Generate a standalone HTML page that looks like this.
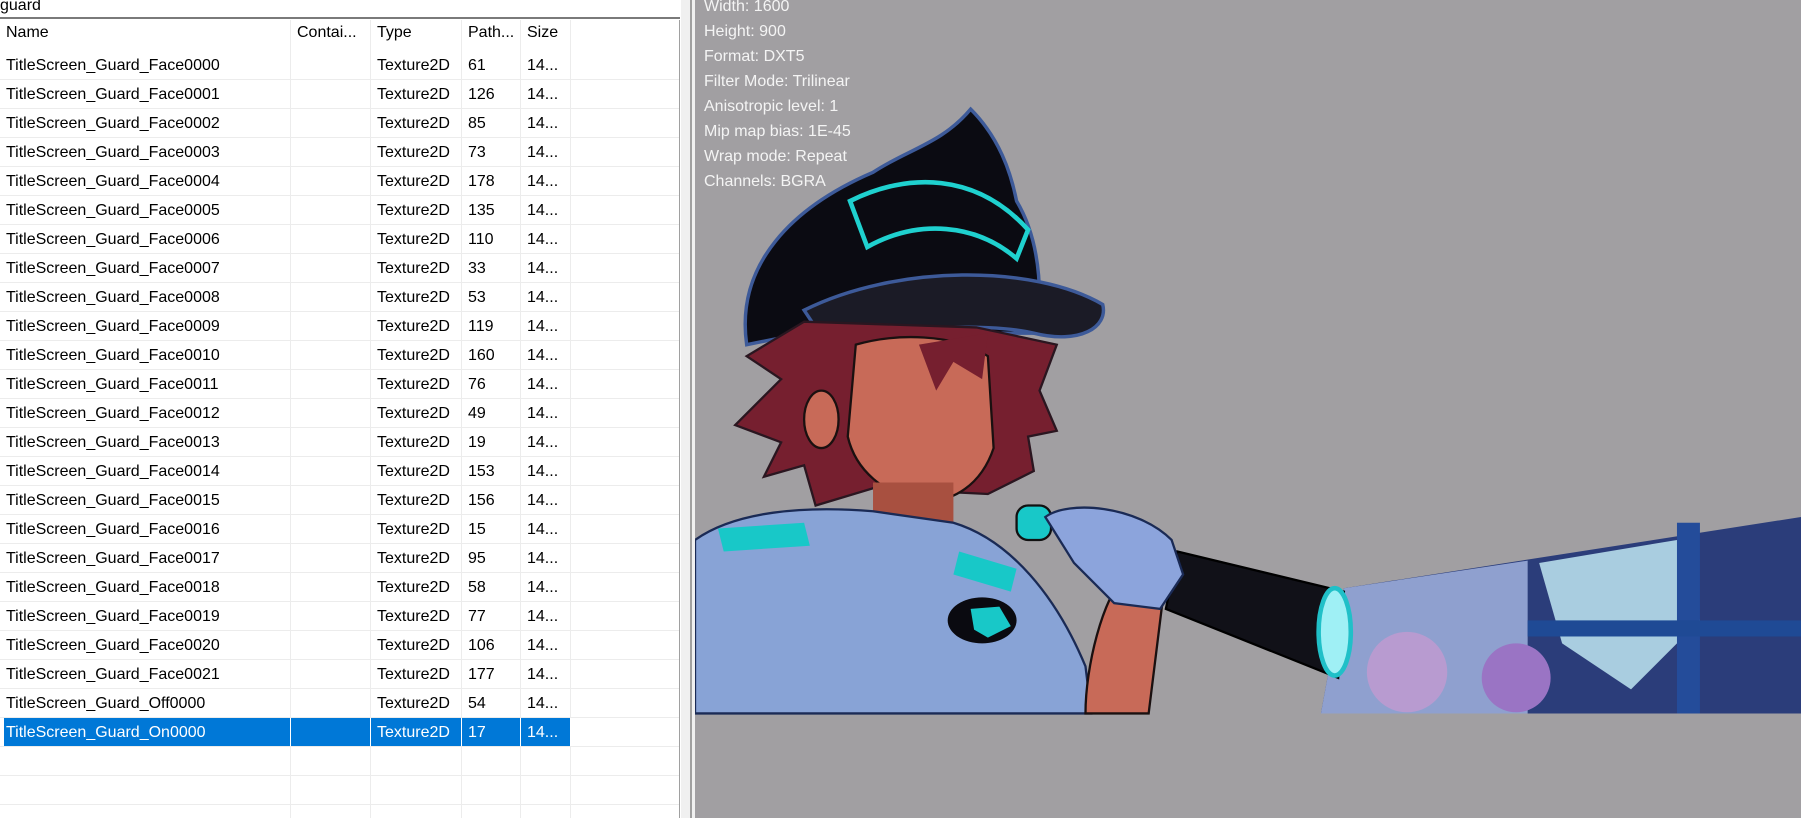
<!DOCTYPE html>
<html><head><meta charset="utf-8"><style>
body{margin:0;width:1801px;height:818px;overflow:hidden;background:#fff;font-family:"Segoe UI","Liberation Sans",sans-serif;position:relative}
#search{position:absolute;left:0;top:0;width:680px;height:17px;border-bottom:2px solid #7a7a7a;font-size:16px;line-height:12px;color:#000;overflow:hidden}
#tbl{position:absolute;left:0;top:20px;width:679px;height:798px;border-right:1px solid #a0a0a0;overflow:hidden}
.row{position:absolute;left:0;height:29px;width:679px;font-size:16px;line-height:29px;color:#000;border-bottom:1px solid #ececec;box-sizing:border-box}
.hdr{border-bottom:none}
.row span{position:absolute;top:0;height:28px;border-right:1px solid #ececec;padding-left:6px;box-sizing:border-box;white-space:nowrap;overflow:hidden}
.c1{left:0;width:291px}.c2{left:291px;width:80px}.c3{left:371px;width:91px}.c4{left:462px;width:59px}.c5{left:521px;width:50px}
.hdr span{height:31px;line-height:26px}
.sel span{background:#0078d7;color:#fff;border-right:1px solid #fff}
.sel .c1{left:4px;width:287px;padding-left:2px}
#split{position:absolute;left:681px;top:0;width:14px;height:818px;background:#f0f0f0}
#split i{position:absolute;left:9px;top:0;width:2px;height:818px;background:#a0a0a0}
#right{position:absolute;left:695px;top:0;width:1106px;height:818px;background:#a19fa2}
#info{position:absolute;left:704px;top:-6px;color:#f4f4f4;font-size:16px;line-height:25px}
svg{position:absolute;left:0;top:0}
</style></head><body>
<div id="search">guard</div>
<div id="tbl">
<div class="row hdr" style="top:0"><span class="c1">Name</span><span class="c2">Contai...</span><span class="c3">Type</span><span class="c4">Path...</span><span class="c5">Size</span></div>
</div>
<div id="split"><i></i></div>
<div id="right">
<svg width="1106" height="818" viewBox="605 0 963 712" preserveAspectRatio="none">
<polygon points="1170,512 1568,450 1568,621 1150,621" fill="#2b3d7a"/>
<polygon points="1170,512 1330,488 1330,621 1150,621" fill="#8fa0cf"/>
<circle cx="1225" cy="585" r="35" fill="#b89bd0"/>
<circle cx="1320" cy="590" r="30" fill="#9a74c4"/>
<polygon points="1340,490 1460,470 1480,540 1420,600 1360,560" fill="#a9cde0"/>
<rect x="1460" y="455" width="20" height="166" fill="#244c9a"/>
<rect x="1330" y="540" width="238" height="14" fill="#1f4a95"/>
<path d="M650,300 C640,230 690,180 760,150 C790,130 820,125 845,95 C870,120 880,150 885,175 C900,200 905,230 905,260 C960,270 960,290 900,290 L700,290Z" fill="#0b0b12" stroke="#3d5a99" stroke-width="3"/>
<path d="M740,175 C790,150 850,150 895,200 L885,225 C850,195 800,190 755,215Z" fill="none" stroke="#1fd1cf" stroke-width="4"/>
<path d="M700,270 C780,230 900,230 960,265 C965,285 940,300 900,290 C860,280 760,285 720,300Z" fill="#1b1b26" stroke="#3d5a99" stroke-width="3"/>
<path d="M700,280 L650,310 L680,330 L640,370 L680,385 L665,415 L700,405 L710,440 L760,425 L860,430 L900,410 L895,380 L920,375 L905,340 L920,300 L850,285Z" fill="#761f2f" stroke="#2a1620" stroke-width="2"/>
<path d="M745,300 C780,290 830,290 860,310 L865,390 C855,420 830,440 800,435 C770,430 745,410 738,380Z" fill="#c86a58" stroke="#1a1010" stroke-width="2"/>
<path d="M800,300 L860,290 L855,330 L830,315 L815,340Z" fill="#761f2f"/>
<ellipse cx="715" cy="365" rx="15" ry="25" fill="#c86a58" stroke="#1a1010" stroke-width="2"/>
<rect x="760" y="420" width="70" height="40" fill="#a85040"/>
<path d="M605,470 C640,445 700,440 760,445 L830,455 C880,470 920,520 945,580 L950,621 L605,621Z" fill="#88a3d6" stroke="#1a2a55" stroke-width="2"/>
<path d="M625,460 L700,455 L705,475 L630,480Z" fill="#18c8c8"/>
<path d="M835,480 L885,495 L880,515 L830,500Z" fill="#18c8c8"/>
<ellipse cx="855" cy="540" rx="30" ry="20" fill="#0a0a10"/>
<path d="M845,530 L870,528 L880,545 L860,555 L848,548Z" fill="#18c8c8"/>
<path d="M945,621 C945,580 960,520 980,500 L1015,500 L1000,621Z" fill="#c86a58" stroke="#1a1010" stroke-width="2"/>
<rect x="885" y="440" width="30" height="30" rx="10" fill="#18c8c8" stroke="#111" stroke-width="2"/>
<polygon points="1025,480 1170,515 1165,590 1015,530" fill="#111118" stroke="#000" stroke-width="2"/>
<ellipse cx="1162" cy="550" rx="14" ry="38" fill="#9ff0f5" stroke="#20c0c8" stroke-width="4"/>
<path d="M910,450 C930,435 990,440 1020,470 L1030,500 L1010,530 L970,525 L935,490Z" fill="#8ca4dc" stroke="#1a2a55" stroke-width="2"/>
</svg>
</div>
<div id="info">Width: 1600<br>Height: 900<br>Format: DXT5<br>Filter Mode: Trilinear<br>Anisotropic level: 1<br>Mip map bias: 1E-45<br>Wrap mode: Repeat<br>Channels: BGRA</div>
<script>
var t=document.getElementById('tbl'),d=[61,126,85,73,178,135,110,33,53,119,160,76,49,19,153,156,15,95,58,77,106,177],h='';
for(var i=0;i<27;i++){var n='',ty='',p='',s='',cl='row';
if(i<22){n='TitleScreen_Guard_Face00'+(i<10?'0':'')+i;ty='Texture2D';p=d[i];s='14...';}
else if(i==22){n='TitleScreen_Guard_Off0000';ty='Texture2D';p=54;s='14...';}
else if(i==23){n='TitleScreen_Guard_On0000';ty='Texture2D';p=17;s='14...';cl='row sel';}
h+='<div class="'+cl+'" style="top:'+(31+i*29)+'px"><span class="c1">'+n+'</span><span class="c2"></span><span class="c3">'+ty+'</span><span class="c4">'+p+'</span><span class="c5">'+s+'</span></div>';}
t.innerHTML+=h;
</script>
</body></html>
